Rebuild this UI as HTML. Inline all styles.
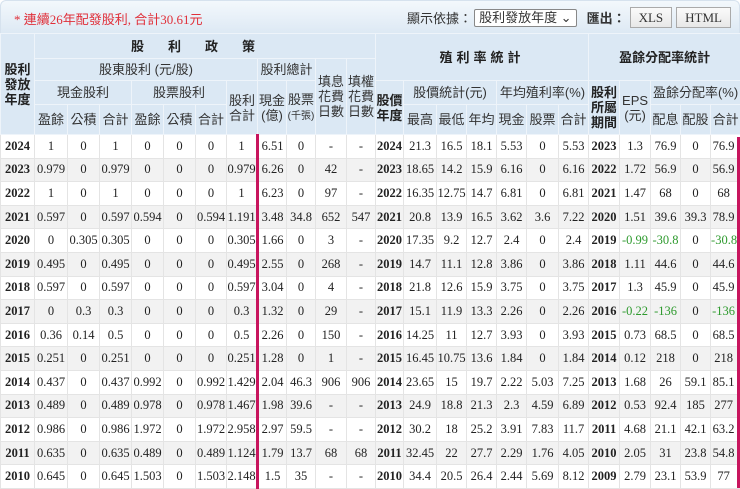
<!DOCTYPE html>
<html><head><meta charset="utf-8"><style>
*{margin:0;padding:0;box-sizing:border-box}
body{width:740px;height:488px;overflow:hidden;background:#fff;font-family:"Liberation Serif","Noto Sans CJK TC",serif;font-size:12.5px;color:#222;position:relative}
.top{position:absolute;left:0;top:0;width:740px;height:33px;background:linear-gradient(#f3f8fc,#dde9f4);border-radius:6px 6px 0 0;border:1px solid #d6e2ee;border-bottom:none}
.note{position:absolute;left:13px;top:8px;color:#e0303a;font-size:13px;font-family:"Liberation Serif","Noto Sans CJK TC",serif}
.ctl{position:absolute;right:8px;top:6px;font-size:13px;font-family:"Liberation Sans","Noto Sans CJK TC",sans-serif;color:#333;display:flex;align-items:center}
.sel{border:1px solid #888;border-radius:2px;background:#fff;padding:0 4px;height:18px;line-height:16px;margin:0 10px 0 2px}
.btn{border:1px solid #aaa;background:linear-gradient(#fafafa,#e8e8e8);height:21px;line-height:19px;padding:0 8px;margin-left:4px;font-family:"Liberation Serif",serif;font-size:13px}
table{position:absolute;left:0;top:33px;border-collapse:collapse;table-layout:fixed;width:740px}
th{background:#dbe8f4;font-weight:normal;font-family:"Liberation Sans","Noto Sans CJK TC",sans-serif;font-size:13px;color:#333;border:1px solid #eef4fa;line-height:15px;padding:0}
th.b{font-weight:bold;color:#222}
td{text-align:center;border:1px solid #e4e4e4;height:23.6px;padding:0;white-space:nowrap;overflow:hidden}
td:last-child{padding-right:4px}
tr:nth-child(odd) td{background:#fff}
tr:nth-child(even) td{background:#f2f2f2}
td.y{font-weight:bold}
td.g{color:#2e9a2e}
.rl{border-left:3px solid #c8155e}
.rbar{position:absolute;left:737px;top:137px;width:3px;height:351px;background:#c8155e}
small{font-size:10px}
</style></head><body>
<div class="top"><div class="note">* 連續26年配發股利, 合計30.61元</div>
<div class="ctl">顯示依據：<span class="sel">股利發放年度 ⌄</span><b>匯出：</b><span class="btn">XLS</span><span class="btn">HTML</span></div></div>
<table>
<colgroup><col style="width:34px"><col style="width:33px"><col style="width:32px"><col style="width:32px"><col style="width:32px"><col style="width:32px"><col style="width:31px"><col style="width:31px"><col style="width:29px"><col style="width:29px"><col style="width:31px"><col style="width:29px"><col style="width:28px"><col style="width:33px"><col style="width:30px"><col style="width:30px"><col style="width:30px"><col style="width:32px"><col style="width:30px"><col style="width:31px"><col style="width:31px"><col style="width:30px"><col style="width:30px"><col style="width:30px"></colgroup>
<thead>
<tr style="height:25px"><th rowspan="4" class="b">股利<br>發放<br>年度</th><th colspan="11" class="b" style="letter-spacing:24px">股利政策</th><th colspan="7" rowspan="2" class="b" style="letter-spacing:4px">殖利率統計</th><th colspan="5" rowspan="2" class="b">盈餘分配率統計</th></tr>
<tr style="height:22px"><th colspan="7">股東股利 (元/股)</th><th colspan="2">股利總計</th><th rowspan="3">填息<br>花費<br>日數</th><th rowspan="3">填權<br>花費<br>日數</th></tr>
<tr style="height:24px"><th colspan="3">現金股利</th><th colspan="3">股票股利</th><th rowspan="2">股利<br>合計</th><th rowspan="2">現金<br>(億)</th><th rowspan="2">股票<br><small>(千張)</small></th><th rowspan="2" class="b">股價<br>年度</th><th colspan="3">股價統計(元)</th><th colspan="3">年均殖利率(%)</th><th rowspan="2" class="b">股利<br>所屬<br>期間</th><th rowspan="2">EPS<br>(元)</th><th colspan="3">盈餘分配率(%)</th></tr>
<tr style="height:30px"><th>盈餘</th><th>公積</th><th>合計</th><th>盈餘</th><th>公積</th><th>合計</th><th>最高</th><th>最低</th><th>年均</th><th>現金</th><th>股票</th><th>合計</th><th>配息</th><th>配股</th><th>合計</th></tr>
</thead>
<tbody>
<tr><td class="y">2024</td><td>1</td><td>0</td><td>1</td><td>0</td><td>0</td><td>0</td><td>1</td><td class="rl">6.51</td><td>0</td><td>-</td><td>-</td><td class="y">2024</td><td>21.3</td><td>16.5</td><td>18.1</td><td>5.53</td><td>0</td><td>5.53</td><td class="y">2023</td><td>1.3</td><td>76.9</td><td>0</td><td>76.9</td></tr>
<tr><td class="y">2023</td><td>0.979</td><td>0</td><td>0.979</td><td>0</td><td>0</td><td>0</td><td>0.979</td><td class="rl">6.26</td><td>0</td><td>42</td><td>-</td><td class="y">2023</td><td>18.65</td><td>14.2</td><td>15.9</td><td>6.16</td><td>0</td><td>6.16</td><td class="y">2022</td><td>1.72</td><td>56.9</td><td>0</td><td>56.9</td></tr>
<tr><td class="y">2022</td><td>1</td><td>0</td><td>1</td><td>0</td><td>0</td><td>0</td><td>1</td><td class="rl">6.23</td><td>0</td><td>97</td><td>-</td><td class="y">2022</td><td>16.35</td><td>12.75</td><td>14.7</td><td>6.81</td><td>0</td><td>6.81</td><td class="y">2021</td><td>1.47</td><td>68</td><td>0</td><td>68</td></tr>
<tr><td class="y">2021</td><td>0.597</td><td>0</td><td>0.597</td><td>0.594</td><td>0</td><td>0.594</td><td>1.191</td><td class="rl">3.48</td><td>34.8</td><td>652</td><td>547</td><td class="y">2021</td><td>20.8</td><td>13.9</td><td>16.5</td><td>3.62</td><td>3.6</td><td>7.22</td><td class="y">2020</td><td>1.51</td><td>39.6</td><td>39.3</td><td>78.9</td></tr>
<tr><td class="y">2020</td><td>0</td><td>0.305</td><td>0.305</td><td>0</td><td>0</td><td>0</td><td>0.305</td><td class="rl">1.66</td><td>0</td><td>3</td><td>-</td><td class="y">2020</td><td>17.35</td><td>9.2</td><td>12.7</td><td>2.4</td><td>0</td><td>2.4</td><td class="y">2019</td><td class="g">-0.99</td><td class="g">-30.8</td><td>0</td><td class="g">-30.8</td></tr>
<tr><td class="y">2019</td><td>0.495</td><td>0</td><td>0.495</td><td>0</td><td>0</td><td>0</td><td>0.495</td><td class="rl">2.55</td><td>0</td><td>268</td><td>-</td><td class="y">2019</td><td>14.7</td><td>11.1</td><td>12.8</td><td>3.86</td><td>0</td><td>3.86</td><td class="y">2018</td><td>1.11</td><td>44.6</td><td>0</td><td>44.6</td></tr>
<tr><td class="y">2018</td><td>0.597</td><td>0</td><td>0.597</td><td>0</td><td>0</td><td>0</td><td>0.597</td><td class="rl">3.04</td><td>0</td><td>4</td><td>-</td><td class="y">2018</td><td>21.8</td><td>12.6</td><td>15.9</td><td>3.75</td><td>0</td><td>3.75</td><td class="y">2017</td><td>1.3</td><td>45.9</td><td>0</td><td>45.9</td></tr>
<tr><td class="y">2017</td><td>0</td><td>0.3</td><td>0.3</td><td>0</td><td>0</td><td>0</td><td>0.3</td><td class="rl">1.32</td><td>0</td><td>29</td><td>-</td><td class="y">2017</td><td>15.1</td><td>11.9</td><td>13.3</td><td>2.26</td><td>0</td><td>2.26</td><td class="y">2016</td><td class="g">-0.22</td><td class="g">-136</td><td>0</td><td class="g">-136</td></tr>
<tr><td class="y">2016</td><td>0.36</td><td>0.14</td><td>0.5</td><td>0</td><td>0</td><td>0</td><td>0.5</td><td class="rl">2.26</td><td>0</td><td>150</td><td>-</td><td class="y">2016</td><td>14.25</td><td>11</td><td>12.7</td><td>3.93</td><td>0</td><td>3.93</td><td class="y">2015</td><td>0.73</td><td>68.5</td><td>0</td><td>68.5</td></tr>
<tr><td class="y">2015</td><td>0.251</td><td>0</td><td>0.251</td><td>0</td><td>0</td><td>0</td><td>0.251</td><td class="rl">1.28</td><td>0</td><td>1</td><td>-</td><td class="y">2015</td><td>16.45</td><td>10.75</td><td>13.6</td><td>1.84</td><td>0</td><td>1.84</td><td class="y">2014</td><td>0.12</td><td>218</td><td>0</td><td>218</td></tr>
<tr><td class="y">2014</td><td>0.437</td><td>0</td><td>0.437</td><td>0.992</td><td>0</td><td>0.992</td><td>1.429</td><td class="rl">2.04</td><td>46.3</td><td>906</td><td>906</td><td class="y">2014</td><td>23.65</td><td>15</td><td>19.7</td><td>2.22</td><td>5.03</td><td>7.25</td><td class="y">2013</td><td>1.68</td><td>26</td><td>59.1</td><td>85.1</td></tr>
<tr><td class="y">2013</td><td>0.489</td><td>0</td><td>0.489</td><td>0.978</td><td>0</td><td>0.978</td><td>1.467</td><td class="rl">1.98</td><td>39.6</td><td>-</td><td>-</td><td class="y">2013</td><td>24.9</td><td>18.8</td><td>21.3</td><td>2.3</td><td>4.59</td><td>6.89</td><td class="y">2012</td><td>0.53</td><td>92.4</td><td>185</td><td>277</td></tr>
<tr><td class="y">2012</td><td>0.986</td><td>0</td><td>0.986</td><td>1.972</td><td>0</td><td>1.972</td><td>2.958</td><td class="rl">2.97</td><td>59.5</td><td>-</td><td>-</td><td class="y">2012</td><td>30.2</td><td>18</td><td>25.2</td><td>3.91</td><td>7.83</td><td>11.7</td><td class="y">2011</td><td>4.68</td><td>21.1</td><td>42.1</td><td>63.2</td></tr>
<tr><td class="y">2011</td><td>0.635</td><td>0</td><td>0.635</td><td>0.489</td><td>0</td><td>0.489</td><td>1.124</td><td class="rl">1.79</td><td>13.7</td><td>68</td><td>68</td><td class="y">2011</td><td>32.45</td><td>22</td><td>27.7</td><td>2.29</td><td>1.76</td><td>4.05</td><td class="y">2010</td><td>2.05</td><td>31</td><td>23.8</td><td>54.8</td></tr>
<tr><td class="y">2010</td><td>0.645</td><td>0</td><td>0.645</td><td>1.503</td><td>0</td><td>1.503</td><td>2.148</td><td class="rl">1.5</td><td>35</td><td>-</td><td>-</td><td class="y">2010</td><td>34.4</td><td>20.5</td><td>26.4</td><td>2.44</td><td>5.69</td><td>8.12</td><td class="y">2009</td><td>2.79</td><td>23.1</td><td>53.9</td><td>77</td></tr>
</tbody></table>
<div class="rbar"></div>
</body></html>
